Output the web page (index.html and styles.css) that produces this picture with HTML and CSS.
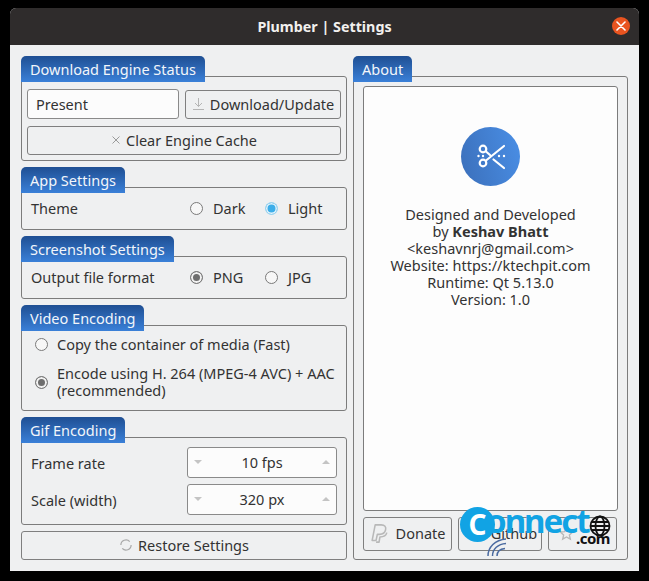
FILE: index.html
```html
<!DOCTYPE html>
<html lang="en">
<head>
  <meta charset="UTF-8" />
  <title>Plumber | Settings</title>
  <link rel="stylesheet" href="styles.css">
</head>
<body>
  <div class="window">
    <div class="titlebar">
      <span class="title">Plumber | Settings</span>
      <span class="close">
        <svg width="10" height="10" viewBox="0 0 10 10"><path d="M1 1l8 8M9 1l-8 8" stroke="#fff" stroke-width="1.6" stroke-linecap="round"/></svg>
      </span>
    </div>

    <div class="content">
      <div class="col-left">
        <div class="group">
          <div class="tab">Download Engine Status</div>
          <div class="box engine-box">
            <div class="engine-row">
              <div class="field">Present</div>
              <div class="btn download-btn">
                <svg width="13" height="14" viewBox="0 0 13 14"><path d="M6.500 1v8.500M3 6l3.500 3.500L10 6M1 12.500h11" fill="none" stroke="#b5b5b5" stroke-width="1"/></svg>
                Download/Update
              </div>
            </div>
            <div class="btn clear-btn">
              <svg width="10" height="10" viewBox="0 0 10 10"><path d="M1.500 1.500l7 7M8.500 1.500l-7 7" stroke="#9a9a9a" stroke-width="1"/></svg>
              Clear Engine Cache
            </div>
          </div>
        </div>

        <div class="group">
          <div class="tab">App Settings</div>
          <div class="box option-box">
            <span class="option-label">Theme</span>
            <div class="radios">
              <span class="radio-item"><span class="radio"></span>Dark</span>
              <span class="radio-item"><span class="radio radio-blue"></span>Light</span>
            </div>
          </div>
        </div>

        <div class="group">
          <div class="tab">Screenshot Settings</div>
          <div class="box option-box">
            <span class="option-label">Output file format</span>
            <div class="radios">
              <span class="radio-item"><span class="radio radio-grey"></span>PNG</span>
              <span class="radio-item"><span class="radio"></span>JPG</span>
            </div>
          </div>
        </div>

        <div class="group">
          <div class="tab">Video Encoding</div>
          <div class="box video-box">
            <div class="video-row"><span class="radio"></span><span>Copy the container of media (Fast)</span></div>
            <div class="video-row"><span class="radio radio-grey"></span><span>Encode using H. 264 (MPEG-4 AVC) + AAC<br>(recommended)</span></div>
          </div>
        </div>

        <div class="group">
          <div class="tab">Gif Encoding</div>
          <div class="box gif-box">
            <div class="gif-row">
              <span>Frame rate</span>
              <div class="spin"><span class="arrow-down"></span><span class="spin-value">10 fps</span><span class="arrow-up"></span></div>
            </div>
            <div class="gif-row">
              <span>Scale (width)</span>
              <div class="spin"><span class="arrow-down"></span><span class="spin-value">320 px</span><span class="arrow-up"></span></div>
            </div>
          </div>
        </div>

        <div class="btn restore-btn">
          <svg width="14" height="14" viewBox="0 0 15 15"><path d="M2 7.500a5.500 5.500 0 0 1 9.500-3.700M13 7.500a5.500 5.500 0 0 1-9.500 3.700" fill="none" stroke="#a8a8a8" stroke-width="1.300"/></svg>
          Restore Settings
        </div>
      </div>

      <div class="col-right">
        <div class="group about-group">
          <div class="tab">About</div>
          <div class="box about-box">
            <div class="about-panel">
              <div class="logo">
                <svg width="30" height="30" viewBox="0 0 30 30">
                  <g fill="none" stroke="#fff" stroke-width="2.200" stroke-linecap="round">
                    <circle cx="7" cy="7" r="3.300"/>
                    <circle cx="7" cy="21" r="3.300"/>
                    <path d="M10 18.500L28 4M10 9.500l4 3.500M17.500 17.500L28 26"/>
                  </g>
                  <g fill="#fff"><circle cx="2.500" cy="14" r="1.200"/><circle cx="7" cy="14" r="1.200"/><circle cx="23" cy="14" r="1.200"/><circle cx="28" cy="14" r="1.200"/></g>
                </svg>
              </div>
              <div class="about-text">
                Designed and Developed<br>
                by <b>Keshav Bhatt</b><br>
                &lt;keshavnrj@gmail.com&gt;<br>
                Website: https://ktechpit.com<br>
                Runtime: Qt 5.13.0<br>
                Version: 1.0
              </div>
            </div>
            <div class="about-buttons">
              <div class="btn donate-btn">
                <svg width="19" height="21" viewBox="0 0 22 24"><path d="M6 2h7c4 0 6 2 5 6-1 4-4 5-7 5H8.500L7 20H2.500z" fill="none" stroke="#b8b8b8" stroke-width="1.800" stroke-linejoin="round"/><path d="M7 22h3.500l1-6c4 0 7-1 8-5" fill="none" stroke="#b8b8b8" stroke-width="1.800" stroke-linejoin="round"/></svg>
                Donate
              </div>
              <div class="btn github-btn">
                <svg width="18" height="18" viewBox="0 0 18 18"><path d="M5 3l2 1.500h4L13 3l.5 4c1 3-1 6-4.500 6S3.500 10 4.500 7z" fill="none" stroke="#b8b8b8" stroke-width="1.400"/></svg>
                Github
              </div>
              <div class="btn rate-btn">
                <svg width="15" height="15" viewBox="0 0 20 20"><path d="M10 2l2.400 5.400 5.800.6-4.400 3.900 1.300 5.700L10 14.700l-5.100 2.900 1.300-5.700L1.800 8l5.800-.6z" fill="none" stroke="#b8b8b8" stroke-width="1.800"/></svg>
              </div>
            </div>
          </div>
        </div>
      </div>
    </div>
  </div>

  <!-- watermark sits over the about buttons -->
  <div class="watermark">
    <span class="wm-circle">C</span>
    <span class="wm-word">onnect</span>
    <svg class="wm-globe" width="22" height="22" viewBox="0 0 22 22">
      <g fill="none" stroke="#111" stroke-width="1.800">
        <circle cx="11" cy="11" r="9.500"/>
        <ellipse cx="11" cy="11" rx="4.500" ry="9.500"/>
        <path d="M2 7h18M1.500 11h19M2 15h18"/>
      </g>
    </svg>
    <span class="wm-com">.com</span>
    <svg class="wm-arcs" width="24" height="20" viewBox="0 0 24 20">
      <g fill="none" stroke="#4a6aa0" stroke-width="1.500">
        <path d="M2 19C2 10 9 3 20 2M6.500 19C6.500 12 12 7 20 6.500M11 19c0-4 3-7 8-7.500"/>
      </g>
    </svg>
  </div>
</body>
</html>
```

FILE: styles.css
```css
body {
  margin: 0;
  height: 581px;
  overflow: hidden;
  background: #000;
  font-family: 'Noto Sans', sans-serif;
  font-size: 14.5px;
  color: #333;
  position: relative;
}
.window {
  margin: 8px 0 0 10px;
  width: 629px;
  height: 563px;
  background: #eff0f1;
  border-radius: 6px 6px 0 0;
  overflow: hidden;
}
.titlebar {
  height: 37px;
  background: #2f2c2c;
  display: flex;
  align-items: center;
  justify-content: center;
  position: relative;
}
.title {
  color: #f2f0ee;
  font-weight: bold;
  font-size: 14.300px;
}
.close {
  position: absolute;
  right: 9px;
  top: 9px;
  width: 18px;
  height: 18px;
  border-radius: 50%;
  background: #e95420;
  display: flex;
  align-items: center;
  justify-content: center;
}
.content {
  display: flex;
  gap: 6px;
  padding: 11px 11px 0;
}
.col-left {
  width: 326px;
  display: flex;
  flex-direction: column;
  gap: 6px;
}
.col-right {
  width: 275px;
}
.tab {
  display: inline-block;
  position: relative;
  height: 26px;
  line-height: 27px;
  padding: 0 9px;
  margin-bottom: -6px;
  color: #f2f6fb;
  background: linear-gradient(#1f4f93, #3a80d8);
  border-radius: 5px 5px 0 0;
  vertical-align: top;
}
.box {
  border: 1px solid #7c7c7c;
  border-radius: 3px;
  box-sizing: border-box;
}
.engine-box {
  height: 85px;
  padding: 12px 5px 0;
}
.engine-row {
  display: flex;
  gap: 6px;
  margin-bottom: 7px;
}
.field {
  width: 152px;
  height: 30px;
  line-height: 28px;
  box-sizing: border-box;
  padding-left: 8px;
  background: #fcfcfc;
  border: 1px solid #8a8a8a;
  border-radius: 3px;
}
.btn {
  display: flex;
  align-items: center;
  justify-content: center;
  gap: 5px;
  box-sizing: border-box;
  padding-bottom: 2px;
  border: 1px solid #7f7f7f;
  border-radius: 3px;
  background: #eff0f1;
}
.download-btn {
  width: 156px;
  height: 29px;
  margin-top: 1px;
}
.clear-btn {
  width: 314px;
  height: 29px;
}
.option-box {
  height: 43px;
  display: flex;
  align-items: center;
  padding: 0 0 2px 9px;
}
.option-label {
  width: 159px;
}
.radios {
  display: flex;
}
.radio-item {
  width: 75px;
  display: flex;
  align-items: center;
  gap: 10px;
}
.radio-item .radio {
  margin-top: 2px;
}
.radio {
  flex: none;
  width: 13px;
  height: 13px;
  box-sizing: border-box;
  border: 1px solid #7a7a7a;
  border-radius: 50%;
  background: #f7f7f7;
}
.radio-blue {
  background: #3daee9;
  box-shadow: inset 0 0 0 1.500px #e4f3fb;
  border-color: #a0d6f0;
}
.radio-grey {
  background: #6e6e6e;
  box-shadow: inset 0 0 0 2px #f2f2f2;
}
.video-box {
  height: 86px;
  padding: 10px 0 0 13px;
}
.video-row {
  display: flex;
  align-items: center;
  gap: 9px;
  line-height: 17px;
  margin-bottom: 12px;
}
.gif-box {
  height: 88px;
  padding: 9px 9px 0;
}
.gif-row {
  display: flex;
  justify-content: space-between;
  align-items: center;
  margin-bottom: 6px;
}
.spin {
  width: 150px;
  height: 31px;
  box-sizing: border-box;
  padding: 0 6px 2px;
  background: #fcfcfc;
  border: 1px solid #8a8a8a;
  border-radius: 3px;
  display: flex;
  align-items: center;
}
.spin-value {
  flex: 1;
  text-align: center;
}
.arrow-down {
  border-left: 4px solid transparent;
  border-right: 4px solid transparent;
  border-top: 4px solid #c4c4c4;
}
.arrow-up {
  border-left: 4px solid transparent;
  border-right: 4px solid transparent;
  border-bottom: 4px solid #c4c4c4;
}
.restore-btn {
  height: 29px;
}
.about-box {
  height: 484px;
  padding: 9px 9px 0;
}
.about-panel {
  height: 425px;
  box-sizing: border-box;
  background: #fdfdfd;
  border: 1px solid #7c7c7c;
  border-radius: 3px;
  padding-top: 40px;
  text-align: center;
}
.logo {
  width: 59px;
  height: 59px;
  margin: 0 auto 20px;
  border-radius: 50%;
  background: linear-gradient(75deg, #3b6fba, #4a8fe6);
  display: flex;
  align-items: center;
  justify-content: center;
}
.about-text {
  line-height: 17px;
}
.about-buttons {
  display: flex;
  gap: 6px;
  margin-top: 6px;
}
.about-buttons .btn {
  height: 34px;
}
.donate-btn {
  width: 89px;
  gap: 7px;
}
.github-btn {
  width: 84px;
  gap: 10px;
}
.rate-btn {
  width: 69px;
  justify-content: flex-start;
  padding-left: 10px;
}
.watermark {
  position: absolute;
  left: 460px;
  top: 505px;
  width: 155px;
  height: 50px;
}
.wm-circle {
  position: absolute;
  left: 0;
  top: 2px;
  width: 35px;
  height: 35px;
  border-radius: 50%;
  background: #11a3e4;
  color: #fff;
  font-weight: bold;
  font-size: 28px;
  line-height: 34px;
  text-align: center;
}
.wm-word {
  position: absolute;
  left: 26px;
  top: -7px;
  color: #11a3e4;
  font-weight: bold;
  font-size: 33px;
  letter-spacing: -2px;
}
.wm-com {
  position: absolute;
  left: 116px;
  top: 23px;
  color: #111;
  font-weight: bold;
  font-size: 15px;
  letter-spacing: -0.5px;
}
.wm-globe {
  position: absolute;
  left: 129px;
  top: 10px;
}
.wm-arcs {
  position: absolute;
  left: 26px;
  top: 32px;
}
```
